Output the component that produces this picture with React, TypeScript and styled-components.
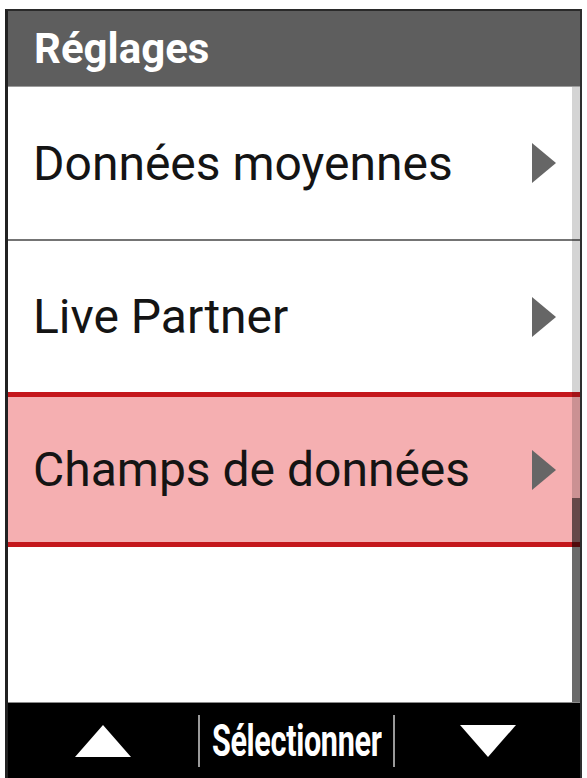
import React from "react"
import styled, { createGlobalStyle } from "styled-components"

const GlobalStyle = createGlobalStyle`
    html, body {
        margin: 0;
        padding: 0;
        background: #ffffff;
        font-family: Roboto, "Liberation Sans", sans-serif;
    }
    * {
        box-sizing: border-box;
    }
`

const Frame = styled.div`
    display: flex;
    flex-direction: column;
    width: 577px;
    height: 769px;
    margin: 9px 0 0 5px;
    border-top: 2px solid #2a2a2a;
    border-left: 3px solid #222;
    border-right: 2px solid #2e2e2e;
    overflow: hidden;
`

const Header = styled.div`
    display: flex;
    align-items: center;
    height: 76px;
    padding-left: 26px;
    background: #5e5e5e;
    border-bottom: 1px solid #9c9c9c;
    color: #ffffff;
    font-size: 42px;
    font-weight: 700;
`

const List = styled.div`
    position: relative;
    display: flex;
    flex-direction: column;
    flex: 1;
    background: #ffffff;
`

const Row = styled.div<{ $height: number; $selected?: boolean; $divider?: boolean }>`
    display: flex;
    align-items: center;
    justify-content: space-between;
    height: ${p => p.$height}px;
    padding: 0 24px 0 25px;
    background: ${p => (p.$selected ? "#f5afb1" : "#ffffff")};
    border-top: ${p => (p.$selected ? "5px solid #c4171c" : "none")};
    border-bottom: ${p =>
        p.$selected ? "5px solid #c4171c" : p.$divider ? "2px solid #747474" : "none"};
`

const Label = styled.span`
    font-size: 48px;
    color: #141414;
    white-space: nowrap;
`

const Filler = styled.div`
    flex: 1;
`

const Track = styled.div`
    position: absolute;
    top: 0;
    right: 0;
    bottom: 0;
    width: 8px;
    background: rgba(0, 0, 0, 0.17);
`

const Thumb = styled.div`
    position: absolute;
    right: 0;
    bottom: 0;
    width: 8px;
    height: 204px;
    background: rgba(0, 0, 0, 0.5);
`

const BottomBar = styled.div`
    display: flex;
    align-items: center;
    height: 76px;
    background: #000000;
    border-top: 1px solid #8a8a8a;
`

const Cell = styled.div<{ $width?: number }>`
    display: flex;
    align-items: center;
    justify-content: center;
    min-width: 0;
    flex: ${p => (p.$width ? `0 0 ${p.$width}px` : "1")};
`

const Sep = styled.div`
    flex: 0 0 2px;
    height: 52px;
    background: #9a9a9a;
`

const Action = styled.span`
    display: inline-block;
    color: #ffffff;
    font-size: 45px;
    font-weight: 700;
    letter-spacing: -0.5px;
    transform: scaleX(0.68);
    white-space: nowrap;
`

const Chevron = () => (
    <svg width="24" height="40" viewBox="0 0 24 40">
        <polygon points="0,0 24,20 0,40" fill="#666666" />
    </svg>
)

const Arrow: React.FC<{ down?: boolean }> = ({ down }) => (
    <svg width="56" height="32" viewBox="0 0 56 32">
        {down ? (
            <polygon points="0,0 56,0 28,32" fill="#ffffff" />
        ) : (
            <polygon points="28,0 56,32 0,32" fill="#ffffff" />
        )}
    </svg>
)

const items = [
    { label: "Données moyennes", height: 154, divider: true },
    { label: "Live Partner", height: 151 },
    { label: "Champs de données", height: 155, selected: true },
]

export default function App() {
    return (
        <>
            <GlobalStyle />
            <Frame>
                <Header>Réglages</Header>
                <List>
                    {items.map(item => (
                        <Row
                            key={item.label}
                            $height={item.height}
                            $selected={item.selected}
                            $divider={item.divider}
                        >
                            <Label>{item.label}</Label>
                            <Chevron />
                        </Row>
                    ))}
                    <Filler />
                    <Track>
                        <Thumb />
                    </Track>
                </List>
                <BottomBar>
                    <Cell $width={190}>
                        <Arrow />
                    </Cell>
                    <Sep />
                    <Cell $width={193}>
                        <Action>Sélectionner</Action>
                    </Cell>
                    <Sep />
                    <Cell>
                        <Arrow down />
                    </Cell>
                </BottomBar>
            </Frame>
        </>
    )
}
